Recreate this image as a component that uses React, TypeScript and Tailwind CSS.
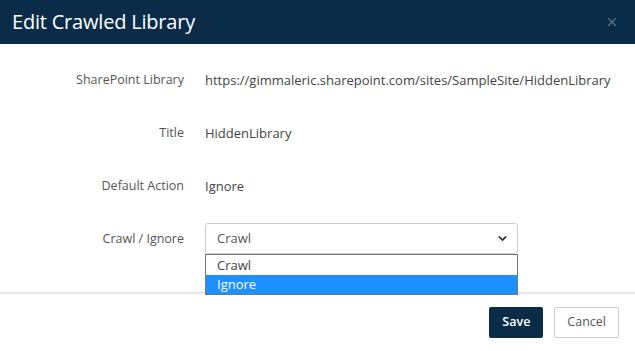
import { ChevronDown, X } from 'lucide-react'

const font = { fontFamily: '"Open Sans", "Noto Sans", sans-serif' }

function Row({ label, children }: { label: string; children: React.ReactNode }) {
  return (
    <div className="flex items-center h-[53px]">
      <div className="w-[184px] text-right text-[12.5px] text-[#555]">{label}</div>
      <div className="ml-[21px] flex-1 text-[13px] text-[#444]">{children}</div>
    </div>
  )
}

export default function App() {
  return (
    <div className="w-[635px] h-[351px] bg-white flex flex-col overflow-hidden" style={font}>
      {/* Header */}
      <header className="h-[44px] bg-[#0a2c48] flex items-center justify-between pl-[12px] pr-[16px]">
        <h1 className="text-[20px] text-white tracking-[-0.2px]">Edit Crawled Library</h1>
        <X className="size-[14px] text-[#5a7488]" strokeWidth={2} />
      </header>

      {/* Body */}
      <div className="flex-1 pt-[10px]">
        <Row label="SharePoint Library">https://gimmaleric.sharepoint.com/sites/SampleSite/HiddenLibrary</Row>
        <Row label="Title">HiddenLibrary</Row>
        <Row label="Default Action">Ignore</Row>
        <Row label="Crawl / Ignore">
          <div className="relative w-[313px] -mt-[2px]">
            <div className="h-[31px] border border-[#ccc] rounded-[3px] flex items-center justify-between pl-[11px] pr-[8px] text-[#555]">
              <span>Crawl</span>
              <ChevronDown className="size-[13px] text-[#333]" strokeWidth={3} />
            </div>
            <div className="absolute left-0 right-0 top-[31px] z-10 bg-white border border-[#767676]">
              <div className="h-[20px] leading-[20px] pl-[11px] text-[#444]">Crawl</div>
              <div className="h-[19px] leading-[19px] pl-[11px] bg-[#1e90ff] text-white">Ignore</div>
            </div>
          </div>
        </Row>
      </div>

      {/* Footer */}
      <footer className="h-[59px] border-t-2 border-[#e6e6e6] flex items-center justify-end gap-[11px] pr-[16px]">
        <button className="h-[31px] px-[13px] bg-[#0a2c48] text-white text-[12.5px] font-semibold rounded-[2px]">Save</button>
        <button className="h-[31px] px-[12px] bg-white border border-[#ccc] text-[#555] text-[12.5px] rounded-[2px]">Cancel</button>
      </footer>
    </div>
  )
}
